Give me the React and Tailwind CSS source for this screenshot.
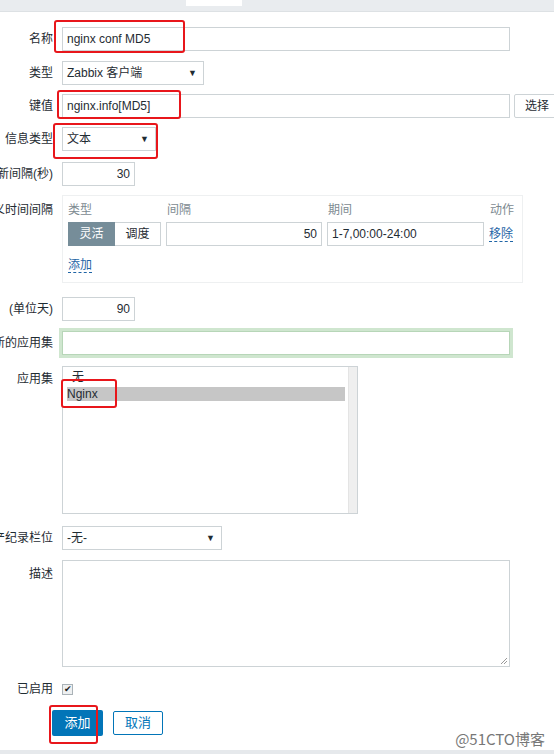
import React from "react";

const font = { fontFamily: '"Liberation Sans", "Noto Sans CJK SC", Arial, sans-serif' };

function Label({ children, top }) {
  return (
    <div className={`w-[53px] shrink-0 flex justify-end whitespace-nowrap text-[12px] text-[#1f2c33] ${top ? "self-start" : ""}`}>
      {children}
    </div>
  );
}

function Select({ w, value }) {
  return (
    <div className={`${w} h-[24px] border border-[#cdd3d6] bg-white flex items-center justify-between pl-[4px] pr-[6px] text-[12px] text-[#1f2c33]`}>
      <span>{value}</span>
      <span className="text-[9px] leading-none">▼</span>
    </div>
  );
}

function RedBox({ cls }) {
  return <div className={`absolute border-2 border-[#e8161b] rounded-[3px] ${cls}`} />;
}

export default function App() {
  return (
    <div style={font} className="relative w-[554px] h-[754px] overflow-hidden bg-white text-[12px] text-[#1f2c33]">
      <div className="h-[12px] bg-[#e9ecef] border-b border-[#dde1e4]">
        <div className="ml-[186px] w-[56px] h-[6px] bg-white" />
      </div>

      <div className="flex flex-col">
        {/* 名称 */}
        <div className="flex items-center mt-[15px]">
          <Label>名称</Label>
          <div className="ml-[9px] shrink-0 w-[448px] h-[24px] border border-[#cdd3d6] flex items-center pl-[4px] text-[12px]">nginx conf MD5</div>
        </div>
        {/* 类型 */}
        <div className="flex items-center mt-[10px]">
          <Label>类型</Label>
          <div className="ml-[9px]"><Select w="w-[142px]" value="Zabbix 客户端" /></div>
        </div>
        {/* 键值 */}
        <div className="flex items-center mt-[9px]">
          <Label>键值</Label>
          <div className="ml-[9px] shrink-0 w-[448px] h-[24px] border border-[#cdd3d6] flex items-center pl-[4px]">nginx.info[MD5]</div>
          <div className="ml-[4px] shrink-0 w-[48px] h-[24px] border border-[#cdd3d6] rounded-[2px] flex items-center pl-[10px] bg-white">选择</div>
        </div>
        {/* 信息类型 */}
        <div className="flex items-center mt-[9px]">
          <Label>信息类型</Label>
          <div className="ml-[9px]"><Select w="w-[94px]" value="文本" /></div>
        </div>
        {/* 更新间隔 */}
        <div className="flex items-center mt-[11px]">
          <Label>新间隔(秒)</Label>
          <div className="ml-[9px] w-[73px] h-[24px] border border-[#cdd3d6] flex items-center justify-end pr-[4px]">30</div>
        </div>
        {/* 自定义时间间隔 */}
        <div className="flex mt-[9px]">
          <Label top><span className="mt-[6px]">义时间间隔</span></Label>
          <div className="ml-[9px] shrink-0 w-[461px] h-[88px] border border-[#eef0f1] px-[5px] pt-[5px]">
            <div className="flex text-[#7d8a91] text-[12px] h-[17px]">
              <span className="w-[99px]">类型</span>
              <span className="w-[161px]">间隔</span>
              <span className="w-[162px]">期间</span>
              <span>动作</span>
            </div>
            <div className="flex items-center mt-[4px]">
              <div className="w-[47px] h-[24px] bg-[#768d99] text-white flex items-center justify-center border border-[#768d99]">灵活</div>
              <div className="w-[46px] h-[24px] border border-[#cdd3d6] border-l-0 flex items-center justify-center">调度</div>
              <div className="ml-[5px] w-[156px] h-[24px] border border-[#cdd3d6] flex items-center justify-end pr-[4px]">50</div>
              <div className="ml-[5px] w-[157px] h-[24px] border border-[#cdd3d6] flex items-center pl-[4px]">1-7,00:00-24:00</div>
              <span className="ml-[5px] text-[#1f65a6] border-b border-dashed border-[#1f65a6] leading-[14px]">移除</span>
            </div>
            <div className="mt-[10px]">
              <span className="text-[#1f65a6] border-b border-dashed border-[#1f65a6] leading-[14px]">添加</span>
            </div>
          </div>
        </div>
        {/* 单位天 */}
        <div className="flex items-center mt-[14px]">
          <Label>(单位天)</Label>
          <div className="ml-[9px] w-[73px] h-[24px] border border-[#cdd3d6] flex items-center justify-end pr-[4px]">90</div>
        </div>
        {/* 新的应用集 */}
        <div className="flex items-center mt-[10px]">
          <Label>新的应用集</Label>
          <div className="ml-[9px] shrink-0 w-[448px] h-[24px] border border-[#b7d6b8] shadow-[0_0_0_3px_#cfe6cf]" />
        </div>
        {/* 应用集 */}
        <div className="flex mt-[11px]">
          <Label top><span className="mt-[4px]">应用集</span></Label>
          <div className="ml-[9px] w-[296px] h-[148px] border border-[#cdd3d6] flex">
            <div className="flex-1 pl-[4px] pt-[3px]">
              <div className="pl-[5px] leading-[14px]">无</div>
              <div className="bg-[#c6c6c6] leading-[14px] mt-[3px] mr-[3px]">Nginx</div>
            </div>
            <div className="w-[9px] bg-[#efefef] border-l border-[#e4e4e4]" />
          </div>
        </div>
        {/* 资产 */}
        <div className="flex items-center mt-[12px]">
          <Label>产纪录栏位</Label>
          <div className="ml-[9px]"><Select w="w-[160px]" value="-无-" /></div>
        </div>
        {/* 描述 */}
        <div className="flex mt-[10px]">
          <Label top><span className="mt-[5px]">描述</span></Label>
          <div className="ml-[9px] shrink-0 w-[448px] h-[107px] border border-[#cdd3d6] relative">
            <svg className="absolute right-[1px] bottom-[1px]" width="9" height="9" viewBox="0 0 9 9">
              <path d="M8 2 L2 8 M8 5 L5 8" stroke="#999" strokeWidth="1" />
            </svg>
          </div>
        </div>
        {/* 已启用 */}
        <div className="flex items-center mt-[13px]">
          <Label>已启用</Label>
          <div className="ml-[9px] w-[11px] h-[11px] border border-[#aab2b7] bg-[#eef0f1] flex items-center justify-center text-[9px] leading-none text-[#222]">✔</div>
        </div>
        {/* buttons */}
        <div className="flex items-center mt-[12px] ml-[52px]">
          <div className="w-[51px] h-[26px] bg-[#0275b8] text-white text-[13px] flex items-center justify-center rounded-[2px]">添加</div>
          <div className="ml-[10px] w-[50px] h-[24px] border border-[#0275b8] text-[#0275b8] text-[13px] flex items-center justify-center rounded-[2px]">取消</div>
        </div>
      </div>

      <div className="absolute right-[9px] bottom-[8px] text-[15px] text-[#777] leading-none" style={{ fontFamily: '"Noto Sans CJK SC", "Liberation Sans", sans-serif' }}>@51CTO博客</div>
      <div className="absolute left-0 right-0 bottom-0 h-[4px] bg-[#e6e9ec]" />

      <RedBox cls="left-[54px] top-[20px] w-[131px] h-[33px]" />
      <RedBox cls="left-[57px] top-[90px] w-[124px] h-[29px]" />
      <RedBox cls="left-[53px] top-[123px] w-[105px] h-[36px]" />
      <RedBox cls="left-[61px] top-[379px] w-[56px] h-[29px]" />
      <RedBox cls="left-[49px] top-[705px] w-[49px] h-[39px]" />
    </div>
  );
}
